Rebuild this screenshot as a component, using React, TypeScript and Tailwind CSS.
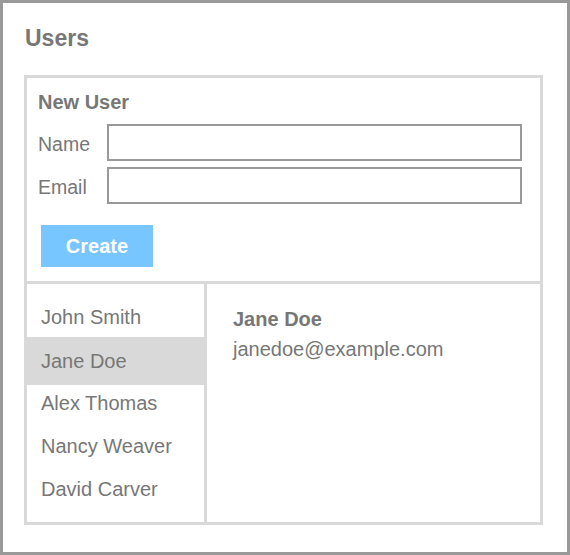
import { useState } from 'react';

const users = [
  { name: 'John Smith', email: 'johnsmith@example.com' },
  { name: 'Jane Doe', email: 'janedoe@example.com' },
  { name: 'Alex Thomas', email: 'alexthomas@example.com' },
  { name: 'Nancy Weaver', email: 'nancyweaver@example.com' },
  { name: 'David Carver', email: 'davidcarver@example.com' },
];

export default function App() {
  const [selected, setSelected] = useState(1);
  const active = users[selected];

  return (
    <div
      className="w-[570px] h-[555px] border-[3px] border-[#999] bg-white text-[#777] pl-[21px] pr-[24px] flex flex-col"
      style={{ fontFamily: '"Liberation Sans", Arial, sans-serif' }}
    >
      <h1 className="text-[23px] leading-[28px] font-bold mt-[21px] mb-[23px] ml-[1px]">Users</h1>

      <div className="border-[3px] border-[#d9d9d9] h-[450px] flex flex-col">
        {/* new user form */}
        <div className="pl-[11px] pr-[18px] pt-[12px] pb-[14px] border-b-[3px] border-[#d9d9d9]">
          <h2 className="text-[20px] leading-[24px] font-bold">New User</h2>
          <div className="mt-[10px] flex flex-col gap-[6px]">
            <div className="flex items-start">
              <label className="w-[69px] h-[37px] text-[19.5px] leading-[40px]">Name</label>
              <input className="flex-1 h-[37px] border-2 border-[#999] outline-none px-2" />
            </div>
            <div className="flex items-start">
              <label className="w-[69px] h-[37px] text-[19.5px] leading-[40px]">Email</label>
              <input className="flex-1 h-[37px] border-2 border-[#999] outline-none px-2" />
            </div>
          </div>
          <button className="mt-[21px] ml-[3px] w-[112px] h-[42px] bg-[#77c6ff] text-white text-[20px] font-bold leading-[24px]">
            Create
          </button>
        </div>

        {/* list + detail */}
        <div className="flex flex-1">
          <ul className="w-[180px] pt-[12px] border-r-[3px] border-[#d9d9d9]">
            {users.map((u, idx) => (
              <li
                key={u.name}
                onClick={() => setSelected(idx)}
                className={`pl-[14px] text-[20px] cursor-pointer ${
                  idx === selected
                    ? 'h-[48px] leading-[48px] -my-[2.5px] bg-[#d9d9d9]'
                    : 'h-[43px] leading-[43px]'
                }`}
              >
                {u.name}
              </li>
            ))}
          </ul>
          <div className="flex-1 pl-[26px] pt-[23px]">
            <div className="text-[20px] leading-[24px] font-bold">{active.name}</div>
            <div className="text-[20px] leading-[24px] mt-[6px]">{active.email}</div>
          </div>
        </div>
      </div>
    </div>
  );
}
